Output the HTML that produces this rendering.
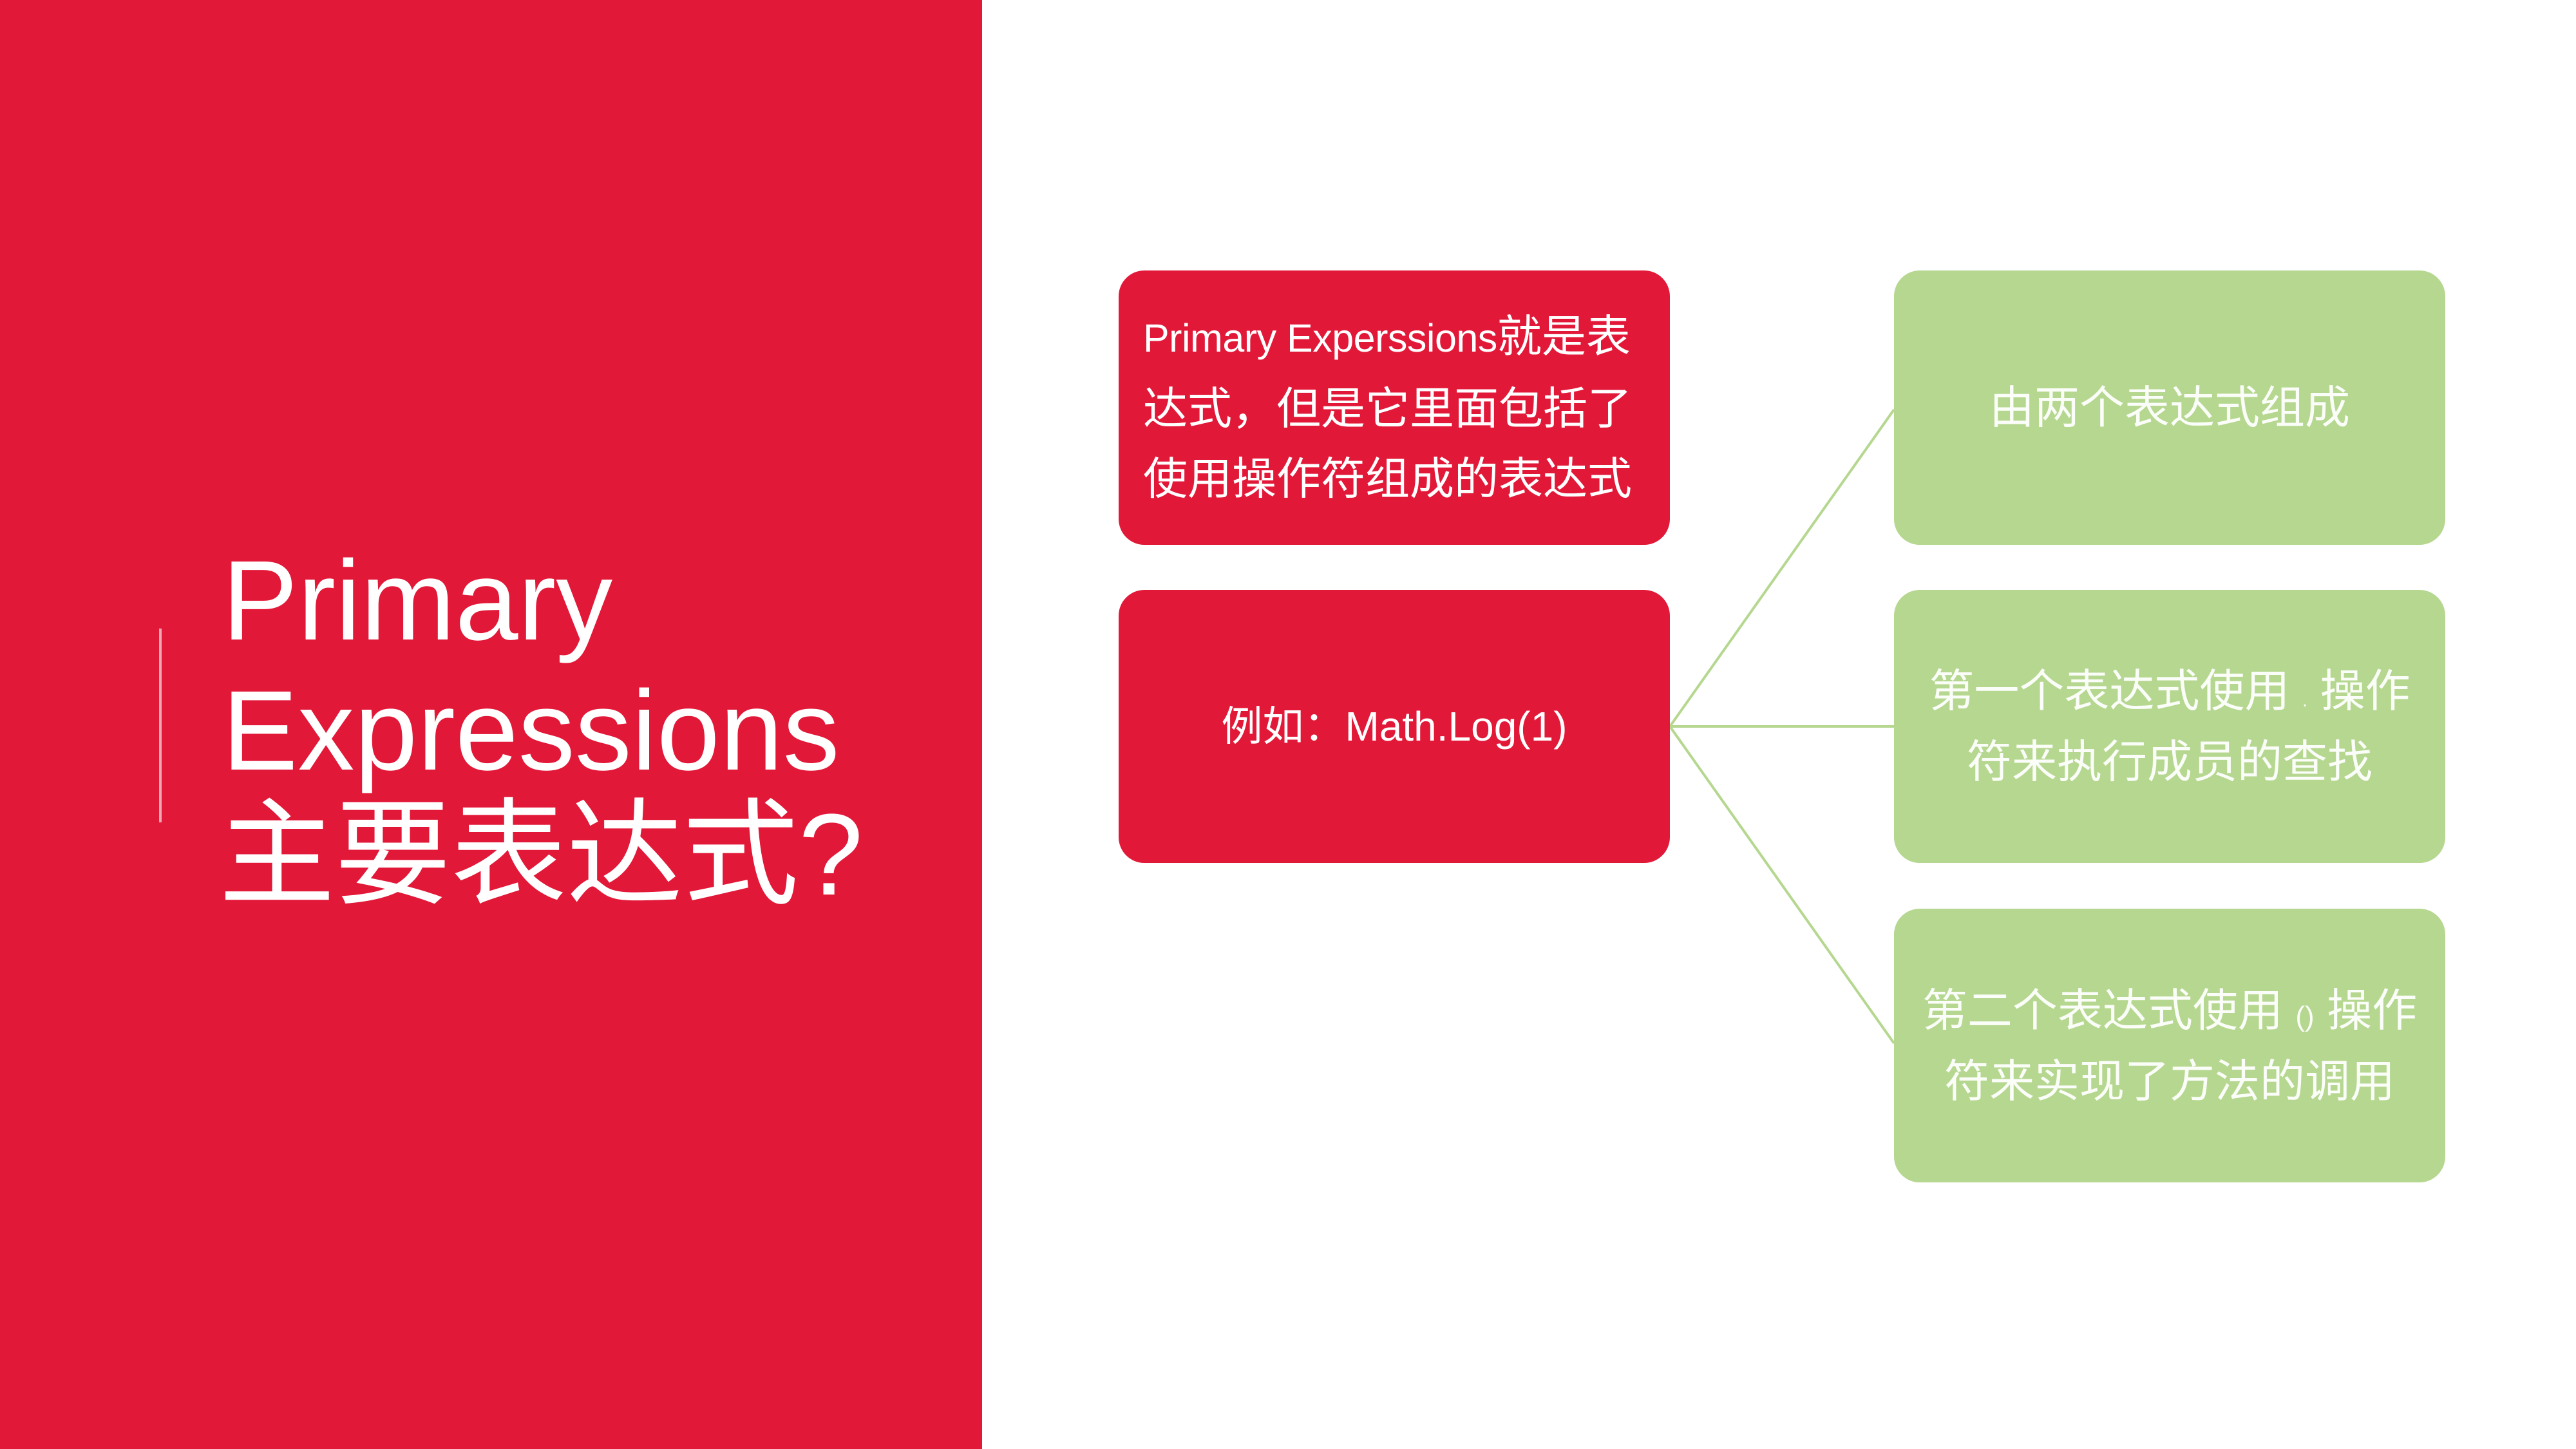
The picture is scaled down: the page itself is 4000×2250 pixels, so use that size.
<!DOCTYPE html>
<html><head><meta charset="utf-8"><style>
*{margin:0;padding:0;box-sizing:border-box}
body{width:4000px;height:2250px;background:#fff;position:relative;overflow:hidden;font-family:"Liberation Sans","Noto Sans CJK SC",sans-serif;color:#fff}
.red{position:absolute;left:0;top:0;width:1525px;height:2250px;background:#E21838}
.vl{position:absolute;left:247px;top:976px;width:4px;height:301px;background:#f0a8b2}
.t{position:absolute;left:345px;font-size:176px;line-height:1;white-space:nowrap}
.box{position:absolute;border-radius:40px;display:flex;align-items:center;justify-content:center;text-align:center;white-space:nowrap}
.r{background:#E21838;left:1737px;width:856px}
.g{background:#B5D78F;left:2941px;width:856px;color:#fbfdf8}
.txt{font-size:70px;line-height:110px}
.sm{line-height:0;vertical-align:baseline}
</style></head><body>
<div class="red"></div>
<div class="vl"></div>
<div class="t" style="top:845px">Primary</div>
<div class="t" style="top:1047px">Expressions</div>
<div class="t" style="top:1238px;font-size:180px;left:340px">主要表达式?</div>

<svg style="position:absolute;left:0;top:0" width="4000" height="2250">
<g stroke="#B5D78F" stroke-width="4" fill="none">
<line x1="2593" y1="1128" x2="2941" y2="636"/>
<line x1="2593" y1="1128" x2="2941" y2="1128"/>
<line x1="2593" y1="1128" x2="2941" y2="1620"/>
</g></svg>

<div class="box r" style="top:420px;height:426px;justify-content:flex-start;text-align:left;padding-left:38px">
<div class="txt" style="font-size:69px;line-height:109px"><span style="font-size:61px;letter-spacing:-0.5px">Primary Experssions</span>就是表<br>达式，但是它里面包括了<br>使用操作符组成的表达式</div></div>
<div class="box r" style="top:916px;height:424px"><div class="txt" style="font-size:64px">例如：Math.Log(1)</div></div>

<div class="box g" style="top:420px;height:426px"><div class="txt">由两个表达式组成</div></div>
<div class="box g" style="top:916px;height:424px"><div class="txt">第一个表达式使用 <span class="sm" style="font-size:30px">.</span> 操作<br>符来执行成员的查找</div></div>
<div class="box g" style="top:1411px;height:425px"><div class="txt">第二个表达式使用 <span class="sm" style="font-size:44px">()</span> 操作<br>符来实现了方法的调用</div></div>
</body></html>
